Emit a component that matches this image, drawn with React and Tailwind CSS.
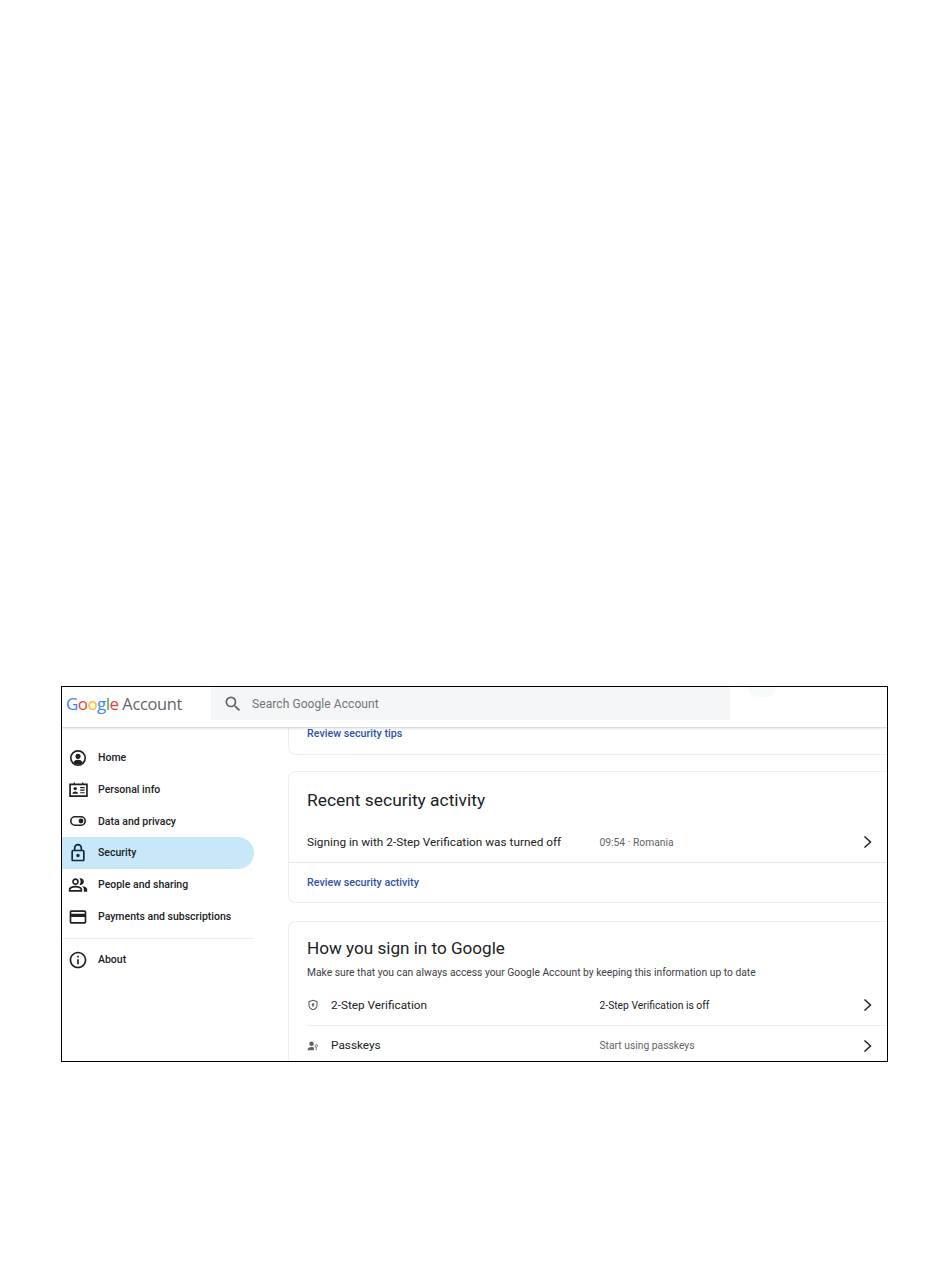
import React from "react";
import { MdSearch, MdOutlineLock, MdOutlineCreditCard, MdInfoOutline, MdOutlinePeopleAlt } from "react-icons/md";

const HomeIcon = () => (
  <svg viewBox="0 0 24 24" className="w-[18px] h-[18px]" fill="none">
    <circle cx="12" cy="12" r="9.6" stroke="#202124" strokeWidth="2.2" />
    <circle cx="12" cy="9.8" r="3.4" fill="#202124" />
    <path d="M5.6 17.6c1.6-2.4 4-3.4 6.4-3.4s4.8 1 6.4 3.4c-1.6 2-3.9 3.1-6.4 3.1s-4.8-1.1-6.4-3.1z" fill="#202124" />
  </svg>
);

const IdIcon = () => (
  <svg viewBox="0 0 20 16" className="w-[19px] h-[15px]" fill="none">
    <path d="M1 2.5h18v12.5H1z" stroke="#202124" strokeWidth="1.8" />
    <path d="M5.5 0.6v2.6M14.5 0.6v2.6" stroke="#202124" strokeWidth="1.4" />
    <circle cx="6.5" cy="7" r="1.8" fill="#202124" />
    <path d="M3.4 12.4c.3-1.7 1.6-2.4 3.1-2.4s2.8.7 3.1 2.4z" fill="#202124" />
    <path d="M11.8 6h4.8M11.8 8.7h4.8M11.8 11.4h4.8" stroke="#202124" strokeWidth="1.2" />
  </svg>
);

const ToggleIcon = () => (
  <svg viewBox="0 0 16 10" className="w-[16px] h-[10px]" fill="none">
    <rect x="0.8" y="0.8" width="14.4" height="8.4" rx="4.2" stroke="#202124" strokeWidth="1.6" />
    <circle cx="11" cy="5" r="2.4" fill="#202124" />
  </svg>
);

const ShieldIcon = () => (
  <svg viewBox="0 0 24 24" className="w-[12px] h-[12px]" fill="none">
    <path d="M12 2.5l8 3v6c0 5-3.3 8.6-8 10-4.700-1.400-8-5-8-10v-6z" stroke="#5f6368" strokeWidth="2.2" />
    <circle cx="12" cy="11" r="2.600" fill="#5f6368" />
    <path d="M11 12h2v4h-2z" fill="#5f6368" />
  </svg>
);

const PasskeyIcon = () => (
  <svg viewBox="0 0 24 24" className="w-[12px] h-[12px]" fill="none">
    <circle cx="9" cy="7.500" r="4.500" fill="#5f6368" />
    <path d="M1 20.500c0-4.500 3.500-6.500 8-6.500 1.800 0 3.400.3 4.700 1v5.500z" fill="#5f6368" />
    <circle cx="18.500" cy="12" r="2.600" stroke="#5f6368" strokeWidth="1.600" />
    <path d="M18.500 14.500v6" stroke="#5f6368" strokeWidth="1.600" />
  </svg>
);

const Chevron = () => (
  <svg viewBox="0 0 10 14" className="w-[10px] h-[14px]" fill="none">
    <path d="M1.500 1.500L7.500 7l-6 5.500" stroke="#202124" strokeWidth="1.500" />
  </svg>
);

const navItems = [
  { label: "Home", icon: <HomeIcon /> },
  { label: "Personal info", icon: <IdIcon /> },
  { label: "Data and privacy", icon: <ToggleIcon /> },
  { label: "Security", icon: <MdOutlineLock size={20} color="#0b2a3c" />, active: true },
  { label: "People and sharing", icon: <MdOutlinePeopleAlt size={20} color="#202124" /> },
  { label: "Payments and subscriptions", icon: <MdOutlineCreditCard size={20} color="#202124" /> },
];

const NavRow = ({ item }) => (
  <div className={`flex items-center h-[31.8px] rounded-r-full pl-[4px] ${item.active ? "bg-[#c8e8f9]" : ""}`}>
    <div className="w-[24px] flex justify-center">{item.icon}</div>
    <span className="ml-[8px] text-[10.5px] font-medium text-[#202124]">{item.label}</span>
  </div>
);

const Row = ({ icon, label, value, valueDark, lower }) => (
  <div className="flex items-center h-[40px] pl-[18px] pr-[14px]">
    <div className="w-[24px] shrink-0">{icon}</div>
    <span className={`w-[268.5px] shrink-0 text-[11.8px] text-[#202124] ${lower ? "mt-[2px]" : ""}`}>{label}</span>
    <span className={`flex-1 text-[10.3px] ${valueDark ? "text-[#202124]" : "text-[#5f6368]"} ${lower ? "mt-[2px]" : ""}`}>{value}</span>
    <Chevron />
  </div>
);

export default function App() {
  return (
    <div className="min-h-[1279px] bg-white pt-[686px] pl-[61px] font-['Roboto',sans-serif]">
      <div className="w-[827px] h-[376px] border border-black flex flex-col overflow-hidden">
        {/* Header */}
        <header className="h-[41px] shrink-0 flex items-start border-b border-[#dcdcdc] shadow-[0_1px_2px_rgba(0,0,0,0.1)] relative z-10 bg-white">
          <div className="w-[149px] h-[34px] flex items-center pl-[4px] font-['Open_Sans',sans-serif]">
            <span className="text-[17px] tracking-[-0.6px]">
              <span className="text-[#4285f4]">G</span>
              <span className="text-[#ea4335]">o</span>
              <span className="text-[#fbbc05]">o</span>
              <span className="text-[#4285f4]">g</span>
              <span className="text-[#34a853]">l</span>
              <span className="text-[#ea4335]">e</span>
            </span>
            <span className="ml-[4px] text-[16.4px] text-[#5f6368] tracking-[-0.3px]">Account</span>
          </div>
          <div className="w-[519px] h-[33px] bg-[#f5f6f7] flex items-center pl-[12px]">
            <MdSearch size={20} color="#5f6368" />
            <span className="ml-[9px] text-[12px] text-[#70757a] tracking-[0.08px]">Search Google Account</span>
          </div>
          <div className="ml-[18px] w-[28px] h-[10px] rounded-b-full bg-[#f7fbf7]" />
        </header>

        <div className="flex flex-1 min-h-0">
          {/* Sidebar */}
          <aside className="w-[226px] shrink-0">
            <nav className="w-[192px] pt-[14px]">
              {navItems.map((item) => (
                <NavRow key={item.label} item={item} />
              ))}
              <div className="h-px bg-[#eceef0] mt-[5px] mb-[5px]" />
              <div className="flex items-center h-[32px] pl-[4px]">
                <div className="w-[24px] flex justify-center">
                  <MdInfoOutline size={20} color="#202124" />
                </div>
                <span className="ml-[8px] text-[10.5px] font-medium text-[#202124]">About</span>
              </div>
            </nav>
          </aside>

          {/* Main */}
          <main className="flex-1 min-w-0 overflow-hidden flex flex-col">
            <div className="h-[27px] shrink-0 border border-t-0 border-r-0 border-[#eceef0] rounded-bl-lg pl-[18px] flex items-start">
              <a className="text-[10.7px] font-medium text-[#2f52a8] leading-[12px]">Review security tips</a>
            </div>

            <section className="mt-[16px] shrink-0 h-[132px] border border-r-0 border-[#eceef0] rounded-l-lg">
              <h2 className="pl-[18px] pt-[16px] text-[17.4px] leading-[24px] text-[#202124]">Recent security activity</h2>
              <div className="flex items-center h-[41px] mt-[10px] pl-[18px] pr-[14px] border-b border-[#e4e6e8]">
                <span className="w-[292.5px] shrink-0 mt-[2px] text-[11.8px] text-[#202124]">Signing in with 2-Step Verification was turned off</span>
                <span className="flex-1 mt-[2px] text-[10.3px] text-[#5f6368]">09:54 · Romania</span>
                <Chevron />
              </div>
              <div className="pl-[18px] pt-[14px] text-[10.7px] leading-[12px] font-medium text-[#2f52a8]">Review security activity</div>
            </section>

            <section className="mt-[18px] shrink-0 border border-b-0 border-r-0 border-[#eceef0] rounded-tl-lg">
              <h2 className="pl-[18px] pt-[14px] text-[17.1px] leading-[24px] text-[#202124]">How you sign in to Google</h2>
              <p className="pl-[18px] pt-[6px] text-[10.3px] leading-[14px] text-[#3c4043]">
                Make sure that you can always access your Google Account by keeping this information up to date
              </p>
              <div className="mt-[5px]">
                <Row icon={<ShieldIcon />} label="2-Step Verification" value="2-Step Verification is off" valueDark lower />
              </div>
              <div className="ml-[18px] h-px bg-[#eceef0]" />
              <Row icon={<PasskeyIcon />} label="Passkeys" value="Start using passkeys" />
            </section>
          </main>
        </div>
      </div>
    </div>
  );
}
